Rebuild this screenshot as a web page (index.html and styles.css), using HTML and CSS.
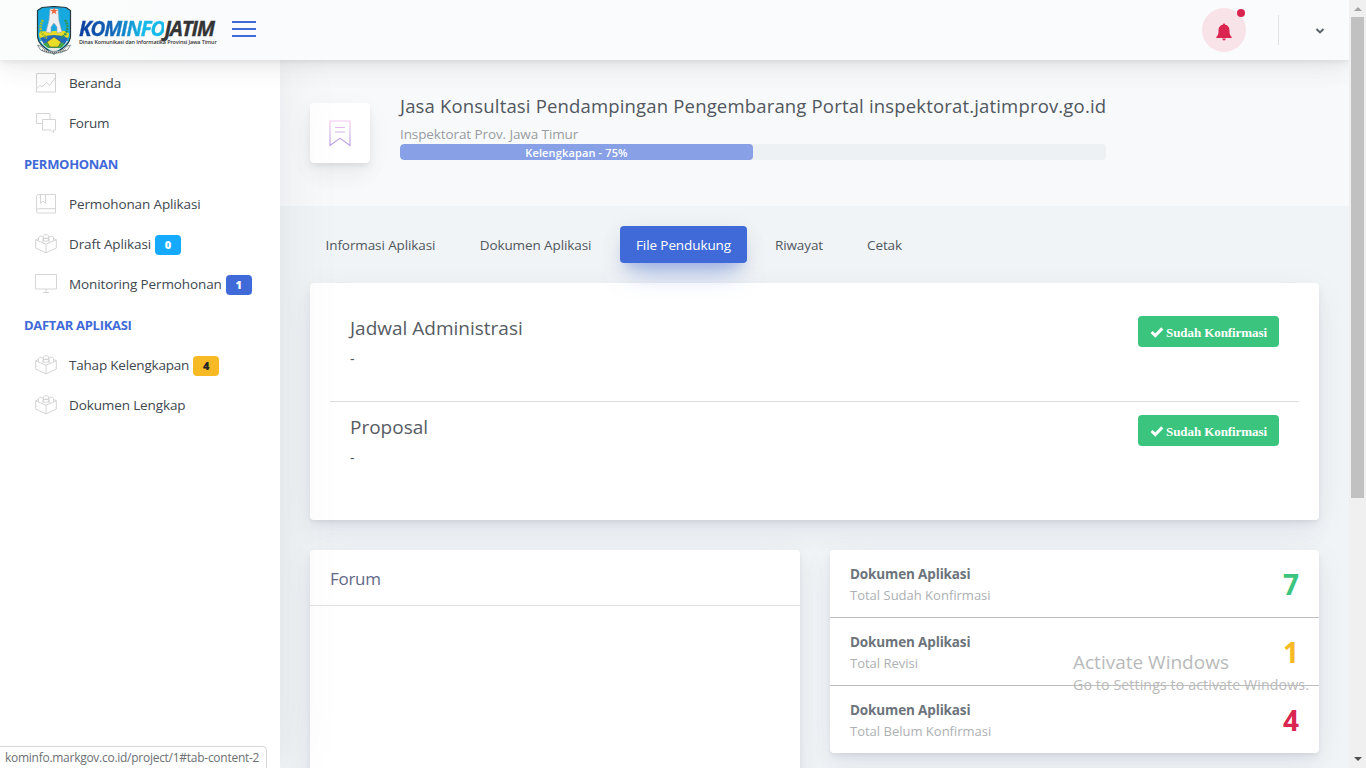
FILE: index.html
```html
<!DOCTYPE html>
<html lang="id">
<head>
<meta charset="utf-8">
<title>Kominfo Jatim</title>
<link rel="stylesheet" href="styles.css">
</head>
<body>
<svg class="defs" width="0" height="0" aria-hidden="true">
  <defs>
    <symbol id="box" viewBox="0 0 22 20"><path d="M.7 5.800 11 10.200l10.300-4.400v8.300L11 18.800.7 14.100zM11 10.200v8.600M.7 5.800l3-1.400M21.300 5.800l-3-1.400M3.500 6.700V3.900c0-2.200 4.800-2.200 4.800 0v1.400M18.500 6.700V3.900c0-2.200-4.800-2.200-4.800 0v1.400M8.300 4.600V2.300c0-2.200 5.400-2.200 5.400 0v2.300M8 8.500V5.800c0-2.200 6-2.200 6 0v2.700"/><ellipse cx="11" cy="5.800" rx="3" ry="1.400"/></symbol>
    <symbol id="check" viewBox="0 0 14 12"><path d="m1.600 6 3.700 3.600 7-7.200"/></symbol>
    <linearGradient id="violet" x1="0" y1="0" x2="0" y2="1"><stop offset="0" stop-color="#f3c6ec"/><stop offset="1" stop-color="#b79ddd"/></linearGradient>
  </defs>
</svg>
<div class="screen">
<div class="app">
  <header class="header">
    <div class="brand">
      <svg class="crest" viewBox="0 0 36 50">
        <path d="M6 1.500 18 .5l12 1 4.500 3v25c0 8-7 13-16.500 18.500C8.500 42.500 1.500 37.500 1.500 29.500v-25z" fill="#16a9e0" stroke="#253b40" stroke-width="1.200"/>
        <path d="M4 35h28c-3 5-8 8-14 11.500C12 43 7 40 4 35z" fill="#e8e9e2"/>
        <path d="M3 27c5-3 9-1 15-2s10-1 15 2c0 4-1 6-3 8H6c-2-2-3-4-3-8z" fill="#e8dc24"/>
        <path d="M4 32q14-6 28 0l-3 6H8z" fill="#236cbb"/>
        <path d="M7 38q11-7 22 0l-4 4H12z" fill="#42a548"/>
        <path d="m18 31 7 5-3 5h-8l-3-5z" fill="#e8dc24" stroke="#48525a" stroke-width=".6"/>
        <path d="M14 3h8l1 12 3 11-5 1v-6l-3-4-3 4v6l-5-1 3-12z" fill="#eeeef0" stroke="#9ba5ac" stroke-width=".6"/>
        <path d="m18 1.500 1 2.500h2.600l-2 1.700.8 2.600L18 6.800l-2.400 1.500.8-2.600-2-1.700H17z" fill="#ef6841"/>
        <path d="M7 14c-4 6-3 14 4 18" fill="none" stroke="#a8bd31" stroke-width="2.600" stroke-dasharray="2 .8"/>
        <path d="M29 14c4 6 3 14-4 18" fill="none" stroke="#30945b" stroke-width="2.600" stroke-dasharray="2 .8"/>
        <path d="M1.500 39q5 1 7 4.500 9 4 19 0 2-4 7-4.500l-3 5q-14 7-27 0z" fill="#f3f4ee" stroke="#626c70" stroke-width=".7"/>
        <path d="M6 44q12 5 24 0" fill="none" stroke="#525b5f" stroke-width="1.200" stroke-dasharray="1.200 .8"/>
      </svg>
      <div class="wordmark">
        <div class="wordmark-name"><span class="wordmark-blue">KOMINFO</span><span class="wordmark-dark">JATIM</span></div>
        <div class="wordmark-sub">Dinas Komunikasi dan Informatika Provinsi Jawa Timur</div>
      </div>
    </div>
    <div class="burger"><i></i><i></i><i></i></div>
    <div class="header-right">
      <div class="bell">
        <svg width="16" height="18" viewBox="0 0 16 18"><path d="M8 .5q1.200 0 1.200 1.300C12.500 2.500 13.500 5 13.500 8c0 3 .5 4.500 2.200 6v1H.3v-1c1.700-1.500 2.200-3 2.200-6 0-3 1-5.500 4.300-6.200Q6.800.5 8 .5zM6.200 15.600h3.600Q9.500 17.500 8 17.500t-1.800-1.900z" fill="#d92550"/></svg>
        <b class="bell-dot"></b>
      </div>
      <div class="separator"></div>
      <svg class="chevron" width="10" height="8" viewBox="0 0 10 8"><path d="m1.500 2 3.500 3.400L8.500 2" fill="none" stroke="#5b626a" stroke-width="2"/></svg>
    </div>
  </header>
  <div class="body">
    <nav class="sidebar">
      <a class="item"><svg class="ico" viewBox="0 0 22 20"><path d="M1.500.5h19v18.500h-19zM2 15.500l3-3 2 1.500 4.500-4.500 3 3L20 5"/></svg><span class="tight">Beranda</span></a>
      <a class="item"><svg class="ico" viewBox="0 0 22 20"><path d="M7.500 10.500h-6V.5h13.500v6M7.500 6.500h13v10.500h-2v2.500l-3-2.500h-8z"/></svg><span class="tight">Forum</span></a>
      <h5 class="heading">PERMOHONAN</h5>
      <a class="item"><svg class="ico" viewBox="0 0 22 20"><path d="M3.500.5h17V19h-17q-2 0-2-2V2.500q0-2 2-2zM1.500 17q0-2.300 2-2.300h17M5.500.5v8.800L8 7l2.500 2.300V.5"/></svg><span>Permohonan Aplikasi</span></a>
      <a class="item"><svg class="ico"><use href="#box"/></svg><span>Draft Aplikasi</span><b class="badge badge-info">0</b></a>
      <a class="item"><svg class="ico" viewBox="0 0 22 20"><path d="M.5.500h21v14.500H.5zM11 15v3.500M8 18.500h6"/></svg><span>Monitoring Permohonan</span><b class="badge badge-primary">1</b></a>
      <h5 class="heading">DAFTAR APLIKASI</h5>
      <a class="item"><svg class="ico"><use href="#box"/></svg><span class="tight">Tahap Kelengkapan</span><b class="badge badge-warning">4</b></a>
      <a class="item"><svg class="ico"><use href="#box"/></svg><span>Dokumen Lengkap</span></a>
    </nav>
    <main class="main">
      <section class="page-title">
        <div class="page-icon"><svg width="22" height="27" viewBox="0 0 22 27"><path d="M1 1h20v24.500l-10-7.300-10 7.300zM6 7.500h10M6 12h10" fill="none" stroke="url(#violet)" stroke-width="1.100"/></svg></div>
        <div class="page-info">
          <h1 class="page-name">Jasa Konsultasi Pendampingan Pengembarang Portal inspektorat.jatimprov.go.id</h1>
          <div class="page-sub">Inspektorat Prov. Jawa Timur</div>
          <div class="progress"><div class="progress-bar" style="width:50%"><span>Kelengkapan - 75%</span></div></div>
        </div>
      </section>
      <div class="tabs">
        <a class="tab tab-1"><span>Informasi Aplikasi</span></a>
        <a class="tab tab-2"><span>Dokumen Aplikasi</span></a>
        <a class="tab tab-3 active"><span>File Pendukung</span></a>
        <a class="tab tab-4"><span>Riwayat</span></a>
        <a class="tab tab-5"><span>Cetak</span></a>
      </div>
      <section class="card files">
        <div class="file"><div><h2 class="file-name">Jadwal Administrasi</h2><p class="file-note">-</p></div><button class="confirm"><svg width="14" height="12"><use href="#check"/></svg><span>Sudah Konfirmasi</span></button></div>
        <div class="file"><div><h2 class="file-name">Proposal</h2><p class="file-note">-</p></div><button class="confirm"><svg width="14" height="12"><use href="#check"/></svg><span>Sudah Konfirmasi</span></button></div>
      </section>
      <div class="columns">
        <section class="card forum"><h2 class="forum-title"><span>Forum</span></h2></section>
        <section class="card stats">
          <div class="stat"><div><div class="stat-name">Dokumen Aplikasi</div><div class="stat-sub">Total Sudah Konfirmasi</div></div><b class="num green">7</b></div>
          <div class="stat"><div><div class="stat-name">Dokumen Aplikasi</div><div class="stat-sub">Total Revisi</div></div><b class="num amber">1</b></div>
          <div class="stat"><div><div class="stat-name">Dokumen Aplikasi</div><div class="stat-sub">Total Belum Konfirmasi</div></div><b class="num red">4</b></div>
        </section>
      </div>
    </main>
  </div>
</div>
<div class="scrollbar"><i class="arrow up"></i><i class="thumb"></i><i class="arrow down"></i></div>
<div class="activate"><div class="activate-title">Activate Windows</div><div class="activate-sub">Go to Settings to activate Windows.</div></div>
<div class="status">kominfo.markgov.co.id/project/1#tab-content-2</div>
</div>
</body>
</html>
```
FILE: styles.css
```css
* { box-sizing: border-box; }
body { margin: 0; font: 14px/20px "Open Sans", "Noto Sans", sans-serif; color: #50575e; }
h1, h2, h5, p { margin: 0; font-weight: 400; }
.defs { position: absolute; }
.screen { position: relative; display: flex; width: 1366px; height: 768px; overflow: hidden; }
.app { width: 1349px; height: 768px; display: flex; flex-direction: column; overflow: hidden; background: #f1f4f6; }

.header { position: relative; z-index: 3; height: 60px; flex: none; display: flex; align-items: center; background: #fafbfc; box-shadow: 0 7px 35px rgba(4,9,20,.03), 0 15px 22px rgba(4,9,20,.03), 0 4px 9px rgba(4,9,20,.05), 0 2px 3px rgba(4,9,20,.03); }
.brand { width: 232px; height: 60px; padding: 6px 0 0 36px; display: flex; gap: 7px; background: linear-gradient(90deg, #fbfdfc, #fafbfc); }
.crest { width: 36px; height: 50px; flex: none; }
.wordmark { padding-top: 12px; white-space: nowrap; }
.wordmark-name { display: flex; font: italic 700 20.500px/20px "Open Sans", sans-serif; letter-spacing: -1.15px; }
.wordmark-blue { color: transparent; background: linear-gradient(90deg, #0d3c9c, #1268b8 40%, #16b9e8 75%); background-clip: text; -webkit-background-clip: text; -webkit-text-stroke: .3px transparent; }
.wordmark-dark { color: #343436; -webkit-text-stroke: .3px #343436; }
.wordmark-sub { font: 600 5.400px/9px "Open Sans", sans-serif; letter-spacing: -.1px; color: #333; }
.burger { width: 24px; display: flex; flex-direction: column; gap: 5px; margin-top: -2px; }
.burger i { height: 2px; background: #3f6ad8; }
.header-right { margin-left: auto; display: flex; align-items: center; padding-right: 24px; }
.bell { position: relative; width: 44px; height: 44px; border-radius: 50%; background: #f8e3e9; display: flex; align-items: center; justify-content: center; }
.bell svg { margin-top: 3px; }
.bell-dot { position: absolute; top: 1px; right: 1px; width: 8px; height: 8px; border-radius: 50%; background: #d92550; }
.separator { width: 1px; height: 30px; background: #dee2e6; margin: 0 36px 0 32px; }
.chevron { margin-top: 2px; }

.body { flex: 1; display: flex; min-height: 0; }
.sidebar { position: relative; z-index: 2; width: 280px; flex: none; padding-top: 3px; background: #fff; box-shadow: 7px 0 60px rgba(8,10,37,.06), 4px 0 20px rgba(4,9,20,.015); }
.item { display: flex; align-items: center; height: 40px; padding-left: 35px; white-space: nowrap; color: #40474e; }
.item span { font-size: 13.500px; letter-spacing: -.12px; }
.item .tight { letter-spacing: -.2px; }
.ico { width: 22px; height: 20px; margin-right: 12px; flex: none; fill: none; stroke: #cfd0d1; stroke-width: .9; }
.heading { height: 41px; padding-left: 24px; font-size: 13px; line-height: 43px; font-weight: 700; letter-spacing: -.3px; color: #3f6ad8; white-space: nowrap; }
.badge { width: 26px; height: 20px; margin: 2px 0 0 4px; border-radius: 4px; font: 800 11px/20px "Open Sans", sans-serif; text-align: center; color: #fff; }
.badge-info { background: #16aaff; }
.badge-primary { background: #3f6ad8; }
.badge-warning { background: #f7b924; color: #212529; }

.main { flex: 1; min-width: 0; }
.page-title { height: 146px; padding: 36px 30px 0; display: flex; background: #f8f9fb; }
.page-icon { width: 60px; height: 60px; margin: 7px 30px 0 0; border-radius: 4px; background: #fff; display: flex; align-items: center; justify-content: center; box-shadow: 0 7px 35px rgba(4,9,20,.03), 0 15px 22px rgba(4,9,20,.03), 0 4px 9px rgba(4,9,20,.05), 0 3px 3px rgba(4,9,20,.03); }
.page-info { width: 706px; white-space: nowrap; }
.page-name { font-size: 18.500px; line-height: 20px; letter-spacing: .17px; }
.page-sub { margin-top: 8px; font-size: 13.500px; line-height: 20px; letter-spacing: -.1px; color: #999da1; }
.progress { height: 16px; border-radius: 4px; background: #eef1f4; overflow: hidden; }
.progress-bar { height: 16px; border-radius: 4px; background: #88a1e6; color: #fff; text-align: center; font-size: 11px; line-height: 18px; font-weight: 600; letter-spacing: .14px; }
.tabs { height: 77px; padding: 20px 30px 0; display: flex; gap: 12px; }
.tab { height: 37px; display: flex; align-items: center; justify-content: center; border-radius: 4px; font-size: 13.500px; letter-spacing: -.1px; white-space: nowrap; }
.tab-1 { width: 141px; } .tab-2 { width: 145px; } .tab-3 { width: 127px; } .tab-4 { width: 80px; } .tab-5 { width: 67px; }
.tab.active { position: relative; z-index: 1; background: #3f6ad8; color: #fff; font-weight: 500; box-shadow: 0 16px 26px -10px rgba(63,106,216,.56), 0 4px 25px rgba(0,0,0,.06), 0 8px 10px -5px rgba(63,106,216,.2); }

.card { background: #fff; border-radius: 4px; box-shadow: 0 7px 35px rgba(8,10,110,.05), 0 15px 22px rgba(8,10,80,.03), 0 4px 9px rgba(4,9,20,.05), 0 2px 3px rgba(4,9,20,.03); }
.files { width: 1009px; height: 237px; margin: 0 0 30px 30px; padding: 20px 20px 0; }
.file { display: flex; justify-content: space-between; height: 99px; padding: 13px 20px 0; border-bottom: 1px solid #dcdddf; }
.file:last-child { border: 0; }
.file-name { font-size: 19px; line-height: 24px; color: #565c63; white-space: nowrap; }
.file-note { margin-top: 9px; }
.confirm { width: 141px; height: 31px; padding: 0; border: 0; border-radius: 4px; background: #3ac47d; color: #fff; display: flex; align-items: center; justify-content: center; gap: 2px; font: 700 13px/20px "Liberation Serif", serif; letter-spacing: -.08px; white-space: nowrap; }
.confirm span { padding-top: 2px; }
.confirm svg { fill: none; stroke: #fff; stroke-width: 3; }
.columns { display: flex; gap: 30px; align-items: flex-start; padding-left: 30px; }
.forum { width: 490px; height: 300px; }
.forum-title { height: 56px; padding-left: 20px; line-height: 58px; font-size: 17px; letter-spacing: -.3px; color: #626987; border-bottom: 1px solid #dfe0ea; }
.stats { width: 489px; height: 203px; }
.stat { height: 68px; padding: 14px 20px 0; display: flex; justify-content: space-between; border-bottom: 1px solid #bdbdbd; white-space: nowrap; }
.stat:last-child { height: 67px; border: 0; }
.stat-name { font-size: 13.500px; line-height: 20px; font-weight: 700; letter-spacing: -.14px; color: #6c737a; }
.stat-sub { font-size: 13px; line-height: 22px; color: #adb0b3; }
.num { font-size: 28px; line-height: 40px; }
.green { color: #3ac47d; } .amber { color: #f7b924; } .red { color: #d92550; }

.scrollbar { width: 17px; height: 768px; flex: none; display: flex; flex-direction: column; align-items: center; background: #f0f0f0; }
.arrow { width: 0; height: 0; border: 4px solid transparent; }
.up { border-top: 0; border-bottom-color: #a3a3a3; margin: 7px 0 6px; }
.thumb { width: 13px; height: 481px; background: #c1c1c1; }
.down { border-bottom: 0; border-top-color: #505050; margin: auto 0 7px; }
.activate { position: absolute; z-index: 5; left: 1073px; top: 650px; color: #b9babb; white-space: nowrap; }
.activate-title { font-size: 19px; line-height: 24px; }
.activate-sub { font-size: 14.200px; line-height: 21px; letter-spacing: .1px; }
.status { position: absolute; z-index: 5; left: -1px; bottom: -1px; width: 268px; height: 23px; padding-left: 5px; border: 1px solid #d5d7da; border-top-right-radius: 4px; background: #fff; font-size: 12px; line-height: 22px; letter-spacing: -.27px; color: #6d7074; white-space: nowrap; }
```
